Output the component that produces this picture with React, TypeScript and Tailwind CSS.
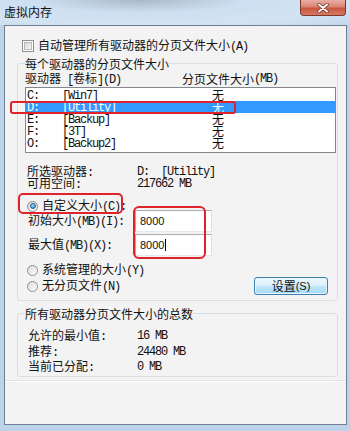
import type { ReactNode } from 'react';

// ascii runs get the narrow mono face, like SimSun half-width
function T({ s }: { s: string }) {
    const parts = s.split(/([\x00-\x7f]+)/).filter(Boolean);
    return (
        <>
            {parts.map((p, i) =>
                /^[\x00-\x7f]+$/.test(p) ? (
                    <span key={i} className="whitespace-pre font-['Liberation_Mono',monospace] text-[12px] tracking-[-1.2px]">{p}</span>
                ) : (
                    <span key={i}>{p}</span>
                )
            )}
        </>
    );
}

function Radio({ on }: { on?: boolean }) {
    return (
        <div className="w-[11px] h-[11px] shrink-0 rounded-full border border-[#8c8c8c] bg-[linear-gradient(135deg,#d9d9d9,#ffffff)] flex items-center justify-center">
            {on && <div className="w-[6px] h-[6px] rounded-full border border-[#1d5f93] bg-[radial-gradient(circle_at_40%_35%,#9fe0fb,#2c86c4)]" />}
        </div>
    );
}

function CheckBox() {
    return (
        <div className="w-[12px] h-[12px] shrink-0 border border-[#8e8f8f] bg-white p-[1px]">
            <div className="w-full h-full border border-[#b5b9bf] bg-[linear-gradient(135deg,#d4d7db,#f7f7f7)]" />
        </div>
    );
}

function Group({ label, children, className }: { label: string; children: ReactNode; className?: string }) {
    return (
        <div className={"ml-[12px] w-[321px] border border-[#d5dfe5] rounded-[3px] " + (className ?? "")}>
            <div className="-mt-[7px] ml-[7px] h-[13px] w-fit bg-[#f3f3f3] flex items-center"><T s={label} /></div>
            {children}
        </div>
    );
}

const drives = [
    { d: "C:", v: "[Win7]" },
    { d: "D:", v: "[Utility]", sel: true },
    { d: "E:", v: "[Backup]" },
    { d: "F:", v: "[3T]" },
    { d: "O:", v: "[Backup2]" },
];

function Row({ label, value, w = 110, pl = "pl-[9px]", className }: { label: string; value?: string; w?: number; pl?: string; className?: string }) {
    return (
        <div className={"flex items-center " + pl + " " + (className ?? "")}>
            <div style={{ width: w }}><T s={label} /></div>
            {value && <T s={value} />}
        </div>
    );
}

function TextBox({ value, caret }: { value: string; caret?: boolean }) {
    return (
        <div className="w-[77px] h-[22px] border border-[#abadb3] border-r-[#dbdfe6] border-b-[#e3e9ef] bg-white flex items-center pl-[4px] font-['Liberation_Sans',sans-serif] text-[11px]">
            {value}
            {caret && <span className="ml-[1px] w-[1px] h-[12px] bg-black" />}
        </div>
    );
}

export default function App() {
    return (
        <div className="relative w-[350px] h-[431px] overflow-hidden bg-[#bdd3ea] text-[12px] leading-[12px] text-[#111] font-['Noto_Sans_CJK_SC','Noto_Sans',sans-serif]">
            {/* title bar */}
            <div className="h-[25px] flex justify-between items-start bg-[radial-gradient(ellipse_at_40%_0%,#a9b8c6_0%,#cddff0_35%,#d3e3f2_70%,#c4d8ec_100%)]">
                <div className="pl-[4px] pt-[5px] leading-[13px]">虚拟内存</div>
                <div className="mr-[4px] w-[46px] h-[16px] rounded-b-[4px] border border-t-0 border-[#80362c] bg-[linear-gradient(to_bottom,#e8b0a4_0%,#d98472_45%,#c9563f_55%,#d67a64_100%)] flex items-center justify-center">
                    <svg width="12" height="10" viewBox="0 0 12 10">
                        <path d="M2 1.5 L10 8.5 M10 1.5 L2 8.5" stroke="#6b2a20" strokeWidth="3.4" strokeLinecap="round" />
                        <path d="M2 1.5 L10 8.5 M10 1.5 L2 8.5" stroke="#ffffff" strokeWidth="2" strokeLinecap="round" />
                    </svg>
                </div>
            </div>

            {/* client area */}
            <div className="ml-[4px] w-[343px] h-[400px] border border-[#6f7f91] bg-[#f3f3f3]">
                <div className="mt-[13px] h-[13px] pl-[17px] flex items-center gap-[4px]">
                    <CheckBox />
                    <span><T s="自动管理所有驱动器的分页文件大小(A)" /></span>
                </div>

                <Group label="每个驱动器的分页文件大小" className="mt-[11px] pb-[5px]">
                    <div className="mt-[2px] h-[13px] pl-[7px] flex items-center">
                        <div className="w-[157px]"><T s="驱动器 [卷标](D)" /></div>
                        <T s="分页文件大小(MB)" />
                    </div>
                    <div className="mt-[2px] ml-[7px] w-[311px] border border-[#828790] bg-white pt-[1px] pb-[3px]">
                        {drives.map((r) => (
                            <div key={r.d} className={"h-[12px] flex items-center pl-[1px] " + (r.sel ? "bg-[#3399ff] text-white" : "")}>
                                <div className="w-[35px]"><T s={r.d} /></div>
                                <div className="w-[150px]"><T s={r.v} /></div>
                                <div>无</div>
                            </div>
                        ))}
                    </div>

                    <Row label="所选驱动器:" value="D:  [Utility]" className="mt-[13px] h-[12px]" />
                    <Row label="可用空间:" value="217662 MB" className="h-[12px]" />

                    <div className="mt-[10px] h-[12px] pl-[9px] flex items-center gap-[4px]">
                        <Radio on />
                        <span><T s="自定义大小(C):" /></span>
                    </div>
                    <div className="-mt-[2px] h-[21px] pl-[10px] flex items-center">
                        <div className="w-[107px]"><T s="初始大小(MB)(I):" /></div>
                        <TextBox value="8000" />
                    </div>
                    <div className="mt-[3px] h-[21px] pl-[10px] flex items-center">
                        <div className="w-[107px]"><T s="最大值(MB)(X):" /></div>
                        <TextBox value="8000" caret />
                    </div>

                    <div className="mt-[9px] h-[12px] pl-[9px] flex items-center gap-[4px]">
                        <Radio />
                        <span><T s="系统管理的大小(Y)" /></span>
                    </div>
                    <div className="mt-[1px] h-[18px] pl-[9px] pr-[9px] flex items-center justify-between">
                        <div className="flex items-center gap-[4px]">
                            <Radio />
                            <span><T s="无分页文件(N)" /></span>
                        </div>
                        <div className="w-[74px] h-[18px] rounded-[3px] border border-[#3c7fb1] bg-[linear-gradient(to_bottom,#eef8fd_0%,#d9f0fc_48%,#bee6fd_52%,#a7d9f5_100%)] flex items-center justify-center shadow-[inset_0_0_0_1px_#e6f4fc]">
                            设置<span className="font-['Liberation_Sans',sans-serif] text-[11px]">(S)</span>
                        </div>
                    </div>
                </Group>

                <Group label="所有驱动器分页文件大小的总数" className="mt-[12px] pb-[3px]">
                    <Row label="允许的最小值:" value="16 MB" w={109} pl="pl-[10px]" className="mt-[9px] h-[13px]" />
                    <Row label="推荐:" value="24480 MB" w={109} pl="pl-[10px]" className="mt-[3px] h-[13px]" />
                    <Row label="当前已分配:" value="0 MB" w={109} pl="pl-[10px]" className="mt-[2px] h-[13px]" />
                </Group>

                <div className="mt-[3px] h-px bg-[#e2e2e2]" />
                <div className="h-px bg-white" />
            </div>

            {/* red annotation marks */}
            <div className="absolute left-[10px] top-[101px] w-[226px] h-[13px] rounded-[3px] border-2 border-[#e0232b]" />
            <div className="absolute left-[18px] top-[193px] w-[105px] h-[21px] rounded-[5px] border-2 border-[#e0232b]" />
            <div className="absolute left-[133px] top-[206px] w-[73px] h-[53px] rounded-[6px] border-2 border-[#e0232b]" />
        </div>
    );
}
